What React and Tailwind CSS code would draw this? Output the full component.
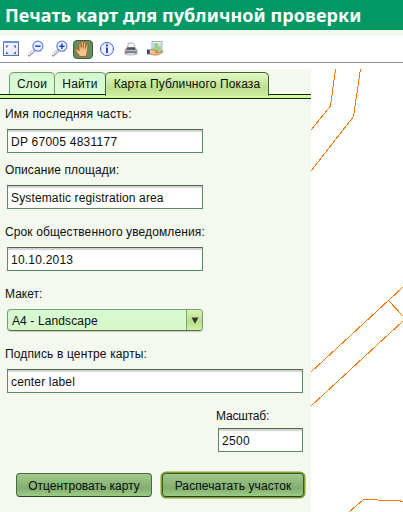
import React from "react";

function FullExtentIcon() {
  return (
    <svg width="18" height="18" viewBox="0 0 18 18" className="block">
      <defs>
        <linearGradient id="win" x1="0" y1="0" x2="1" y2="1">
          <stop offset="0" stopColor="#ffffff" />
          <stop offset="1" stopColor="#dfe3ea" />
        </linearGradient>
      </defs>
      <rect x="1.5" y="1.5" width="15" height="14" fill="url(#win)" stroke="#5a6fac" />
      <rect x="1" y="1" width="16" height="2" fill="#6f90e0" />
      <path d="M4 5.500h2.700L4 8.200zM14 5.500h-2.700L14 8.200zM4 14h2.700L4 11.300zM14 14h-2.700l2.700-2.700z" fill="#3a5fd0" />
    </svg>
  );
}

function Magnifier({ plus }) {
  return (
    <svg width="18" height="18" viewBox="0 0 18 18" className="block">
      <path d="M7 10.5L2.3 15" stroke="#9a9ba8" strokeWidth="3" strokeLinecap="round" />
      <path d="M6.6 10.5L2.2 14.6" stroke="#eceef4" strokeWidth="1.4" strokeLinecap="round" />
      <circle cx="10.9" cy="6.2" r="5" fill="#e9f0ff" stroke="#6582dc" strokeWidth="1.2" />
      <path d={plus ? "M8.200 6.200h5.400M10.900 3.500V8.900" : "M8.200 6.200h5.400"} stroke="#2444c4" strokeWidth="1.5" />
    </svg>
  );
}

function HandIcon() {
  return (
    <svg width="18" height="18" viewBox="2 1.500 16 16" className="block">
      <path
        d="M7 16.2C6.4 14.6 4.5 12.6 3.7 11c-.7-1.3.7-2 1.6-1.1l1.2 1.3V5c0-1.3 1.6-1.3 1.7 0l.2 3.2V3.6c0-1.3 1.7-1.3 1.8 0v4.6l.4-4c.1-1.2 1.7-1.1 1.7.1l-.1 4.5.6-2.6c.3-1.1 1.8-.8 1.6.5l-.7 5.6c-.2 1.6-.8 2.5-1 3.9z"
        fill="#f5c48c"
        stroke="#a5612b"
        strokeWidth=".8"
      />
      <path d="M8.3 8v2M10.3 8v2M12.2 8.5v1.500" stroke="#c68048" strokeWidth=".6" />
    </svg>
  );
}

function InfoIcon() {
  return (
    <svg width="16" height="16" viewBox="0 0 16 16" className="block">
      <circle cx="8" cy="8" r="6.6" fill="#f5f8ff" stroke="#4868d4" strokeWidth="1" />
      <circle cx="8" cy="8" r="5.6" fill="none" stroke="#c3d1f8" strokeWidth=".9" />
      <rect x="7" y="3.5" width="2" height="2" fill="#2a4bd0" />
      <path d="M6.5 6.5H9v5.500H7V7.600h-.5z" fill="#2a4bd0" />
    </svg>
  );
}

function PrinterIcon() {
  return (
    <svg width="16" height="16" viewBox="0 0 16 16" className="block">
      <path d="M4.500 7l.8-5h4.400l2 2V7z" fill="#f5f7f8" stroke="#9aa0a5" strokeWidth=".8" />
      <path d="M2 9l2-2.500h8L14 9v4H2z" fill="#b5b8bc" stroke="#85898d" strokeWidth=".7" />
      <path d="M4.200 6.500h7.500l.8 2.300h-9z" fill="#4d5155" />
      <rect x="2.500" y="10.200" width="11" height="1.800" fill="#7b7f83" />
      <rect x="11.500" y="9.300" width="1.300" height="1" fill="#76dc63" />
      <path d="M4 12h8v2H4z" fill="#e9ecee" stroke="#8b9297" strokeWidth=".5" />
    </svg>
  );
}

function MapHandIcon() {
  return (
    <svg width="18" height="18" viewBox="0 0 18 18" className="block">
      <rect x="6" y="1.500" width="10" height="11.500" fill="#f6f7f3" stroke="#8d9996" strokeWidth=".8" />
      <path d="M7.300 3h7.400v8H7.300z" fill="#8fd5e4" />
      <path d="M9 3h3l-.8 3.500L14.700 7.500V11H7.300V8.500L9 7z" fill="#9bd184" />
      <path d="M11.800 3.300h2.500v2.800h-2z" fill="#f1e58e" />
      <path d="M3.500 10l3-.8 3 1.700 2 .1c1 .2.800 1.200 0 1.300H9l3.300.3 3.400-1.800c1.100-.3 1.300.8.700 1.300L12.500 14.800 8 15l-4.500-1z" fill="#f6c28c" stroke="#ae6e3d" strokeWidth=".8" />
      <rect x="1" y="9.500" width="2.500" height="4.800" fill="#344677" />
    </svg>
  );
}

function Label({ children, className = "" }) {
  return <div className={"h-[14px] pl-[5px] text-[12px] leading-[14px] whitespace-nowrap " + className}>{children}</div>;
}

function Field({ value, className = "" }) {
  return (
    <div className={"ml-[7px] h-6 border border-[#5b8b65] border-t-[#55654a] bg-white pl-[3px] text-[12px] leading-[24px] whitespace-nowrap shadow-[inset_0_2px_1px_#d3d3d3] " + className}>
      {value}
    </div>
  );
}

function Tabs() {
  const inactive = "h-[22px] rounded-t-[5px] border border-b-0 border-[#6e9a6c] bg-linear-to-b from-[#d5f7d0] to-[#dcfdd5] text-center text-[12px] leading-[22px] tracking-[0.25px] whitespace-nowrap";
  return (
    <div className="pt-[3px]">
      <div className="flex h-[22px] items-end pl-[9px]">
        <div className={inactive + " w-[46px]"}>Слои</div>
        <div className={inactive + " w-[51px] border-l-0"}>Найти</div>
        <div className="z-10 -mb-[2px] -ml-px h-6 w-[164px] rounded-t-[5px] border border-b-0 border-[#3f6630] bg-linear-to-b from-[#e2f9c4] via-[#bddf91] via-65% to-[#cfee9f] text-center text-[12px] leading-[22px] tracking-[0.14px] whitespace-nowrap">
          Карта Публичного Показа
        </div>
      </div>
      <div className="h-[5px] border-y border-[#08280b] bg-[#d4f8a0]" />
    </div>
  );
}

export default function App() {
  return (
    <div className="flex h-[512px] w-[403px] flex-col overflow-hidden bg-white font-['Liberation_Sans',Arial,sans-serif] text-[#0b0f0b]">
      <header className="h-[30px] shrink-0 bg-[#009966] pl-[5px] font-['Noto_Sans',sans-serif] text-[18px] leading-[31px] font-bold tracking-[0.08px] whitespace-nowrap text-white">
        Печать карт для публичной проверки
      </header>
      <div className="h-[6px] shrink-0 bg-[#f4f9ee]" />
      <div className="flex h-[27px] shrink-0 items-center border-b border-[#8a939b] pl-[2px]">
        <FullExtentIcon />
        <div className="ml-[7px]"><Magnifier /></div>
        <div className="ml-[6px]"><Magnifier plus /></div>
        <div className="ml-1 flex h-[19px] w-5 items-center justify-center rounded-[4px] border border-[#405e37] bg-[#678d5b]">
          <HandIcon />
        </div>
        <div className="ml-[6px]"><InfoIcon /></div>
        <div className="ml-[8px]"><PrinterIcon /></div>
        <div className="ml-[7px]"><MapHandIcon /></div>
      </div>
      <div className="h-[6px] shrink-0" />
      <main className="flex h-[443px] shrink-0">
        <section className="h-full w-[311px] shrink-0 bg-[#f4f9f0]">
          <Tabs />
          <Label className="mt-2 tracking-[0.17px]">Имя последняя часть:</Label>
          <Field value="DP 67005 4831177" className="mt-2 w-[196px] tracking-[0.25px]" />
          <Label className="mt-[10px] tracking-[0.1px]">Описание площади:</Label>
          <Field value="Systematic registration area" className="mt-2 w-[196px] tracking-[0.14px]" />
          <Label className="mt-4 tracking-[0.11px]">Срок общественного уведомления:</Label>
          <Field value="10.10.2013" className="mt-2 w-[196px] tracking-[0.22px]" />
          <Label className="mt-4">Макет:</Label>
          <div className="mt-2 ml-[7px] flex h-[22px] w-[196px] overflow-hidden rounded-[4px] border border-[#77a070] border-b-[#536d46] bg-linear-to-b from-[#d8fad2] to-[#d5f9ca] text-[12px] leading-[22px] shadow-[0_1px_1px_#c4cdbb]">
            <div className="flex-1 pl-1 tracking-[0.12px]">A4 - Landscape</div>
            <div className="flex w-4 items-center justify-center border-l border-[#83a567] bg-linear-to-b from-[#d9f3b2] via-[#b9dc8d] via-60% to-[#d2f0a7]">
              <svg width="8" height="7" viewBox="0 0 8 7"><path d="M.5.5h7L4 6.700z" fill="#30382b" /></svg>
            </div>
          </div>
          <Label className="mt-4 tracking-[0.14px]">Подпись в центре карты:</Label>
          <Field value="center label" className="mt-2 w-[296px] tracking-[0.16px]" />
          <Label className="mt-4 ml-[211px] -tracking-[0.2px]">Масштаб:</Label>
          <div className="flex pl-[211px]">
            <Field value="2500" className="mt-[5px] w-[85px] tracking-[0.33px]" />
          </div>
          <div className="mt-[21px] flex items-center pl-4 text-[12px] whitespace-nowrap">
            <button className="h-6 w-[136px] rounded-[4px] border border-[#4c6846] border-b-[#283e22] bg-linear-to-b from-[#a2cc8d] via-[#83ad70] via-65% to-[#9ccd86] text-center leading-[24px]">
              Отцентровать карту
            </button>
            <button className="ml-[10px] h-6 w-[142px] rounded-[4px] border border-[#3d5c25] border-b-[#263e19] bg-linear-to-b from-[#9fca8b] via-[#83ad70] via-65% to-[#9ccd86] text-center leading-[24px] tracking-[0.1px] shadow-[0_0_0_1.500px_#819e2f]">
              Распечатать участок
            </button>
          </div>
        </section>
        <svg width="92" height="443" viewBox="311 69 92 443" fill="none" stroke="#f47c14" shapeRendering="crispEdges" className="block shrink-0">
          <path d="M335.500 69L330.500 106L311 130" />
          <path d="M360.500 69L353.500 116.500L311 171" />
          <path d="M403 287L311 372M388.500 300.500L403 316" />
          <path d="M403 321L311 406" />
          <path d="M349 512L363.500 499.500H377.500L378.500 500.500H400L401 501.500H403" />
        </svg>
      </main>
    </div>
  );
}
